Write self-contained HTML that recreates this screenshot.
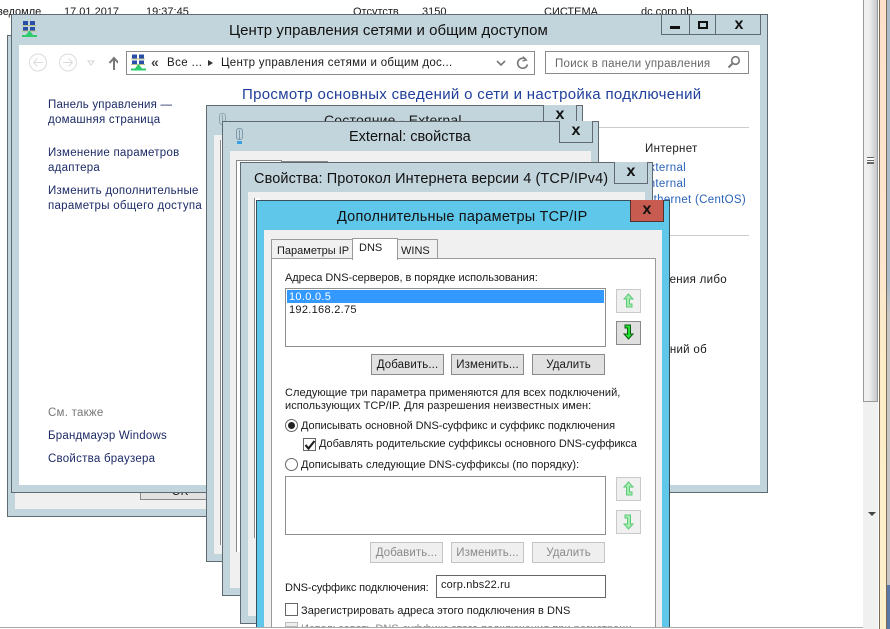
<!DOCTYPE html>
<html><head><meta charset="utf-8"><style>
html,body{margin:0;padding:0;background:#fff}
body{width:890px;height:629px;overflow:hidden;position:relative;font-family:"Liberation Sans",sans-serif;font-size:11.5px;color:#1a1a1a}
div,svg{position:absolute;box-sizing:border-box}
.t{white-space:nowrap;line-height:14px}
.w{background:#c3d5dc;border:1px solid #5f6b70}
.in{background:#f0f0f0}
.x{background:#c3d5dc;border:1px solid #5f6b70;border-top:none;font:bold 16px "Liberation Sans",sans-serif;text-align:center;line-height:19px;color:#111}
.b{background:#e1e1e1;border:1px solid #adadad;text-align:center;line-height:20px;height:21px;width:73px;font-size:11.5px;letter-spacing:.1px}
.d{color:#8a8a8a;background:#efefef;border-color:#c4c4c4}
.box{background:#fff;border:1px solid #8e8e8e}
.n{color:#1c2a66;font-size:11.5px}
.a{border:1px solid #c9c9c9;background:#f0f0f0;width:25px;height:24px}
</style></head><body>
<div class="t" style="left:-3px;top:5px;font-size:11px">ведомле</div>
<div class="t" style="left:64px;top:5px;font-size:11px">17.01.2017</div>
<div class="t" style="left:146px;top:5px;font-size:11px">19:37:45</div>
<div class="t" style="left:353px;top:5px;font-size:11px">Отсутств</div>
<div class="t" style="left:422px;top:5px;font-size:11px">3150</div>
<div class="t" style="left:544px;top:5px;font-size:11px">СИСТЕМА</div>
<div class="t" style="left:641px;top:5px;font-size:11px">dc.corp.nb</div>

<!-- right side -->
<div style="left:863px;top:0;width:15px;height:629px;background:#f0f0f0"></div>
<div style="left:863px;top:0;width:15px;height:402px;background:linear-gradient(90deg,#f1f1f1,#eee 40%,#c8c8cc);border:1px solid #9a9a9a;border-top:none"></div>
<div style="left:867px;top:157px;width:7px;height:7px;border-top:1px solid #666;border-bottom:1px solid #666;background:linear-gradient(#fff 0 2px,#666 2px 3px,#fff 3px 4px,#666 4px 5px,#fff 5px)"></div>
<div style="left:868px;top:512px;border:4px solid transparent;border-top:4px solid #444;border-bottom:none"></div>
<div style="left:879px;top:0;width:8px;height:629px;border-left:1px solid #7d6a55;border-right:1px solid #7d6a55;background:linear-gradient(#fde0cc,#fde6cf 40%,#fdeec8 60%,#fdf0cc)"></div>
<div style="left:887px;top:0;width:3px;height:629px;background:linear-gradient(#a9bccb,#a9bccb 45%,#c6c6c6 50%,#c6c6c6 93%,#5a78a8 93%)"></div>

<!-- back window -->
<div class="w" style="left:7px;top:35px;width:300px;height:482px"></div>
<div class="in" style="left:15px;top:480px;width:280px;height:29px"></div>
<div class="b" style="left:140px;top:478px;width:80px;height:22px;line-height:26px;border-color:#888">OK</div>

<!-- main window -->
<div class="w" style="left:11px;top:14px;width:757px;height:479px"></div>
<div style="left:19px;top:45px;width:741px;height:440px;background:#fff"></div>
<svg style="left:21px;top:20px" width="17" height="17" viewBox="0 0 17 17"><rect x="2" y="1" width="5" height="4" fill="#2a4fa8"/><rect x="9" y="1" width="5" height="4" fill="#2a4fa8"/><rect x="2" y="7" width="5" height="4" fill="#2a4fa8"/><rect x="9" y="7" width="5" height="4" fill="#2a4fa8"/><path d="M1 5.500h14M1 11h14" stroke="#b8c080"/><path d="M8 11l-3 4h7l-3-4z" fill="#2ecb6a"/><rect x="1" y="15" width="15" height="2" fill="#2ecb6a"/></svg>
<div class="t" id="mt" style="left:229px;top:22px;font-size:15px;line-height:17px;color:#111;letter-spacing:.05px">Центр управления сетями и общим доступом</div>
<div style="left:661px;top:14px;width:100px;height:21px;border:1px solid #5f6b70;border-top:none"></div>
<div style="left:689px;top:14px;width:1px;height:21px;background:#5f6b70"></div>
<div style="left:715px;top:14px;width:1px;height:21px;background:#5f6b70"></div>
<div style="left:670px;top:26px;width:10px;height:3px;background:#111"></div>
<div style="left:698px;top:21px;width:10px;height:8px;border:2px solid #111"></div>
<div style="left:729px;top:15px;width:20px;font:bold 16px/19px 'Liberation Sans',sans-serif;text-align:center;color:#111">x</div>

<!-- nav -->
<svg style="left:28px;top:53px" width="90" height="20" viewBox="0 0 90 20" fill="none" stroke="#dcdcdc"><circle cx="10" cy="9.500" r="8.500"/><circle cx="40" cy="9.500" r="8.500"/><path d="M15 9.500H6M9.500 5.500l-4 4 4 4M35 9.500h9M40.500 5.500l4 4-4 4"/><path d="M60 8h6l-3 4z" stroke="#d5d5d5"/><path d="M86 17V6M81.500 10L86 5l4.500 5" stroke="#777" stroke-width="2"/></svg>
<div style="left:126px;top:51px;width:409px;height:24px;background:#fff;border:1px solid #8a8a8a"></div>
<svg style="left:130px;top:53px" width="17" height="18" viewBox="0 0 17 17"><rect x="2" y="1" width="5" height="4" fill="#2a4fa8"/><rect x="9" y="1" width="5" height="4" fill="#2a4fa8"/><rect x="2" y="7" width="5" height="4" fill="#2a4fa8"/><rect x="9" y="7" width="5" height="4" fill="#2a4fa8"/><path d="M1 5.500h14M1 11h14" stroke="#b8c080"/><path d="M8 11l-3 4h7l-3-4z" fill="#2ecb6a"/><rect x="1" y="15" width="15" height="2" fill="#2ecb6a"/></svg>
<div class="t" style="left:151px;top:55px;font-weight:bold;font-size:14px;color:#444">«</div>
<div class="t" style="left:167px;top:56px;font-size:11.500px;letter-spacing:.4px">Все ...</div>
<div style="left:208px;top:60px;border:3.500px solid transparent;border-left:5px solid #333;border-right:none"></div>
<div class="t" style="left:221px;top:56px;font-size:11.500px;letter-spacing:.28px">Центр управления сетями и общим дос...</div>
<svg style="left:495px;top:55px" width="36" height="16" viewBox="0 0 36 16" fill="none" stroke="#777"><path d="M2 6l4 4 4-4" stroke-width="1.600"/><path d="M31 4.500a5 5 0 1 0 1.500 5" stroke-width="1.600"/><path d="M28 1.500l3.500 3.500-4 1" stroke-width="1.200"/></svg>
<div style="left:545px;top:51px;width:204px;height:23px;background:#fff;border:1px solid #8a8a8a"></div>
<div class="t" style="left:555px;top:57px;color:#666;font-size:11.500px;letter-spacing:.28px">Поиск в панели управления</div>
<svg style="left:727px;top:55px" width="14" height="14" viewBox="0 0 14 14" fill="none" stroke="#777" stroke-width="1.600"><circle cx="8.500" cy="5.500" r="3.800"/><path d="M5.500 8.500L1.500 12.500" stroke-width="2"/></svg>

<!-- sidebar -->
<div class="t n" style="left:48px;top:98px;letter-spacing:.2px">Панель управления —</div>
<div class="t n" style="left:48px;top:113px;letter-spacing:.25px">домашняя страница</div>
<div class="t n" style="left:48px;top:146px;letter-spacing:.25px">Изменение параметров</div>
<div class="t n" style="left:48px;top:161px;letter-spacing:.25px">адаптера</div>
<div class="t n" style="left:48px;top:184px;letter-spacing:.25px">Изменить дополнительные</div>
<div class="t n" style="left:48px;top:199px;letter-spacing:.28px">параметры общего доступа</div>
<div class="t" style="left:48px;top:406px;color:#777;letter-spacing:.25px">См. также</div>
<div class="t n" style="left:48px;top:429px;letter-spacing:.2px">Брандмауэр Windows</div>
<div class="t n" style="left:48px;top:452px;letter-spacing:.25px">Свойства браузера</div>

<div class="t" style="left:242px;top:86px;font-size:15px;line-height:18px;color:#1f3f9a;letter-spacing:.32px">Просмотр основных сведений о сети и настройка подключений</div>
<div style="left:583px;top:127px;width:166px;height:1px;background:#ccc"></div>
<div style="left:583px;top:235px;width:166px;height:1px;background:#ccc"></div>
<div class="t" style="left:645px;top:142px;letter-spacing:.3px">Интернет</div>
<div class="t" style="left:600px;top:161px;color:#2a62b8;letter-spacing:.3px;width:86px;text-align:right">External</div>
<div class="t" style="left:600px;top:177px;color:#2a62b8;letter-spacing:.3px;width:86px;text-align:right">Internal</div>
<div class="t" style="left:600px;top:193px;color:#2a62b8;letter-spacing:.3px;width:146px;text-align:right">Ethernet (CentOS)</div>
<div class="t" style="left:600px;top:273px;letter-spacing:.3px;width:127px;text-align:right">ения либо</div>
<div class="t" style="left:600px;top:343px;letter-spacing:.3px;width:107px;text-align:right">ний об</div>

<!-- status window -->
<div class="w" style="left:206px;top:105px;width:377px;height:457px"></div>
<div class="in" style="left:214px;top:135px;width:361px;height:419px"></div>
<div style="left:220px;top:140px;width:6px;height:405px;background:#fff;border-left:1px solid #888"></div>
<svg style="left:217px;top:112px" width="11" height="17" viewBox="0 0 11 17" fill="none" stroke="#8ea6b0"><rect x="2.500" y="1.500" width="6" height="11" rx="2.500"/><path d="M5.500 3v9"/></svg>
<div class="t" style="left:324px;top:112px;font-size:14px;line-height:16px;letter-spacing:.2px">Состояние - External</div>
<div class="x" style="left:543px;top:105px;width:34px;height:22px">x</div>

<!-- external props -->
<div class="w" style="left:222px;top:121px;width:377px;height:475px"></div>
<div class="in" style="left:230px;top:151px;width:361px;height:437px"></div>
<div style="left:236px;top:160px;width:46px;height:392px;background:#fff;border-left:1px solid #888;border-top:1px solid #888;border-right:1px solid #888"></div>
<div style="left:282px;top:161px;width:46px;height:1px;background:#888"></div>
<svg style="left:234px;top:127px" width="11" height="18" viewBox="0 0 11 18" fill="none" stroke="#7a98a8"><rect x="2.500" y="1.500" width="6" height="11" rx="2.500"/><path d="M5.500 3v9"/><path d="M3 14h5v3H3z" fill="#3a9fe0" stroke="none"/></svg>
<div class="t" style="left:349px;top:129px;font-size:14.500px;line-height:17px;color:#111">External: свойства</div>
<div class="x" style="left:559px;top:121px;width:34px;height:22px">x</div>

<!-- tcp props -->
<div class="w" style="left:240px;top:162px;width:413px;height:462px"></div>
<div class="in" style="left:248px;top:192px;width:397px;height:424px"></div>
<div style="left:254px;top:198px;width:6px;height:340px;background:#fff;border-left:1px solid #888"></div>
<div class="t" style="left:254px;top:171px;font-size:14.500px;line-height:17px;color:#111;letter-spacing:.1px">Свойства: Протокол Интернета версии 4 (TCP/IPv4)</div>
<div class="x" style="left:614px;top:162px;width:34px;height:22px">x</div>

<!-- advanced -->
<div style="left:256px;top:200px;width:414px;height:427px;background:#5fc7ea;border:1px solid #37505c;border-bottom:none"></div>
<div class="in" style="left:264px;top:230px;width:398px;height:397px"></div>
<div class="t" style="left:337px;top:209px;font-size:14.500px;line-height:17px;color:#111;letter-spacing:.2px">Дополнительные параметры TCP/IP</div>
<div style="left:630px;top:200px;width:34px;height:22px;background:#c75b50;border:1px solid #54322c;border-top:none;font:bold 16px/19px 'Liberation Sans',sans-serif;text-align:center;color:#111">x</div>

<!-- tabs -->
<div style="left:271px;top:239px;width:82px;height:20px;background:#f0f0f0;border:1px solid #9a9a9a;border-bottom:none"></div>
<div style="left:396px;top:239px;width:42px;height:20px;background:#f0f0f0;border:1px solid #9a9a9a;border-bottom:none"></div>
<div style="left:271px;top:258px;width:385px;height:369px;background:#fff;border:1px solid #9a9a9a;border-bottom:none"></div>
<div style="left:352px;top:238px;width:46px;height:22px;background:#fff;border:1px solid #9a9a9a;border-bottom:none"></div>
<div class="t" style="left:277px;top:244px;font-size:11px">Параметры IP</div>
<div class="t" style="left:359px;top:241px;font-size:11px">DNS</div>
<div class="t" style="left:401px;top:244px;font-size:11px">WINS</div>

<div class="t" style="left:285px;top:271px;font-size:11px;letter-spacing:-.04px">Адреса DNS-серверов, в порядке использования:</div>
<div class="box" style="left:285px;top:288px;width:321px;height:59px"></div>
<div style="left:287px;top:290px;width:317px;height:13px;background:#3399ff"></div>
<div class="t" style="left:289px;top:291px;font-size:11px;line-height:13px;letter-spacing:.3px;color:#fff">10.0.0.5</div>
<div class="t" style="left:289px;top:304px;font-size:11px;line-height:13px;letter-spacing:.3px">192.168.2.75</div>

<div class="a" style="left:616px;top:289px"></div>
<svg style="left:622px;top:292px" width="13" height="18" viewBox="0 0 13 18" fill="#a4eeb0" stroke="#5cc878"><path d="M6.500 2L2 7h2.500v8h5.500v-3H7.500V7H11z"/></svg>
<div class="a" style="left:616px;top:321px;background:#dfdfdf;border-color:#8a8a8a"></div>
<svg style="left:622px;top:323px" width="13" height="18" viewBox="0 0 13 18" fill="#1fe02f" stroke="#0c5a16"><path d="M3 2h5.500v9H11l-4.500 5L2 11h3.500V5H3z"/></svg>

<div class="b" style="left:371px;top:354px;border-color:#8a8a8a">Добавить...</div>
<div class="b" style="left:451px;top:354px;border-color:#8a8a8a">Изменить...</div>
<div class="b" style="left:532px;top:354px;border-color:#8a8a8a">Удалить</div>

<div class="t" style="left:285px;top:386px;font-size:11px;letter-spacing:.045px">Следующие три параметра применяются для всех подключений,</div>
<div class="t" style="left:285px;top:399px;font-size:11px;letter-spacing:.045px">использующих TCP/IP. Для разрешения неизвестных имен:</div>

<div style="left:285px;top:419px;width:13px;height:13px;border-radius:50%;border:1px solid #666;background:#fff"></div>
<div style="left:288px;top:422px;width:7px;height:7px;border-radius:50%;background:#222"></div>
<div class="t" style="left:301px;top:419px;font-size:11px;letter-spacing:-.05px">Дописывать основной DNS-суффикс и суффикс подключения</div>
<div style="left:303px;top:438px;width:13px;height:13px;border:1px solid #666;background:#fff"></div>
<svg style="left:304px;top:439px" width="12" height="12" viewBox="0 0 12 12" fill="none" stroke="#222" stroke-width="2.200"><path d="M1.500 6l3 3.500L10.500 2"/></svg>
<div class="t" style="left:319px;top:437px;font-size:11px;letter-spacing:-.05px">Добавлять родительские суффиксы основного DNS-суффикса</div>
<div style="left:285px;top:458px;width:13px;height:13px;border-radius:50%;border:1px solid #666;background:#fff"></div>
<div class="t" style="left:301px;top:458px;font-size:11px;letter-spacing:.03px">Дописывать следующие DNS-суффиксы (по порядку):</div>

<div class="box" style="left:285px;top:476px;width:321px;height:59px"></div>
<div class="a" style="left:616px;top:477px"></div>
<svg style="left:622px;top:480px" width="13" height="18" viewBox="0 0 13 18" fill="#a4eeb0" stroke="#5cc878"><path d="M6.500 2L2 7h2.500v8h5.500v-3H7.500V7H11z"/></svg>
<div class="a" style="left:616px;top:510px"></div>
<svg style="left:622px;top:513px" width="13" height="18" viewBox="0 0 13 18" fill="#a4eeb0" stroke="#5cc878"><path d="M3 2h5.500v9H11l-4.500 5L2 11h3.500V5H3z"/></svg>

<div class="b d" style="left:370px;top:542px">Добавить...</div>
<div class="b d" style="left:451px;top:542px">Изменить...</div>
<div class="b d" style="left:532px;top:542px">Удалить</div>

<div class="t" style="left:285px;top:581px;font-size:11px;letter-spacing:-.11px">DNS-суффикс подключения:</div>
<div class="box" style="left:436px;top:575px;width:170px;height:23px;border-color:#666"></div>
<div class="t" style="left:441px;top:578px;font-size:11px;letter-spacing:.15px">corp.nbs22.ru</div>
<div style="left:285px;top:603px;width:13px;height:13px;border:1px solid #666;background:#fff"></div>
<div class="t" style="left:301px;top:604px;font-size:11px;letter-spacing:.045px">Зарегистрировать адреса этого подключения в DNS</div>
<div style="left:285px;top:622px;width:13px;height:5px;border:1px solid #bbb;background:#eee"></div>
<div style="left:301px;top:622px;width:330px;height:5px;overflow:hidden"><div class="t" style="left:0;top:0;font-size:11px;color:#888;letter-spacing:.045px">Использовать DNS-суффикс этого подключения при регистрации в DNS</div></div>
<div style="left:0;top:627px;width:863px;height:2px;background:#fff"></div>
<div style="left:0;top:627px;width:863px;height:1px;background:#a8a8a8"></div>
</body></html>
